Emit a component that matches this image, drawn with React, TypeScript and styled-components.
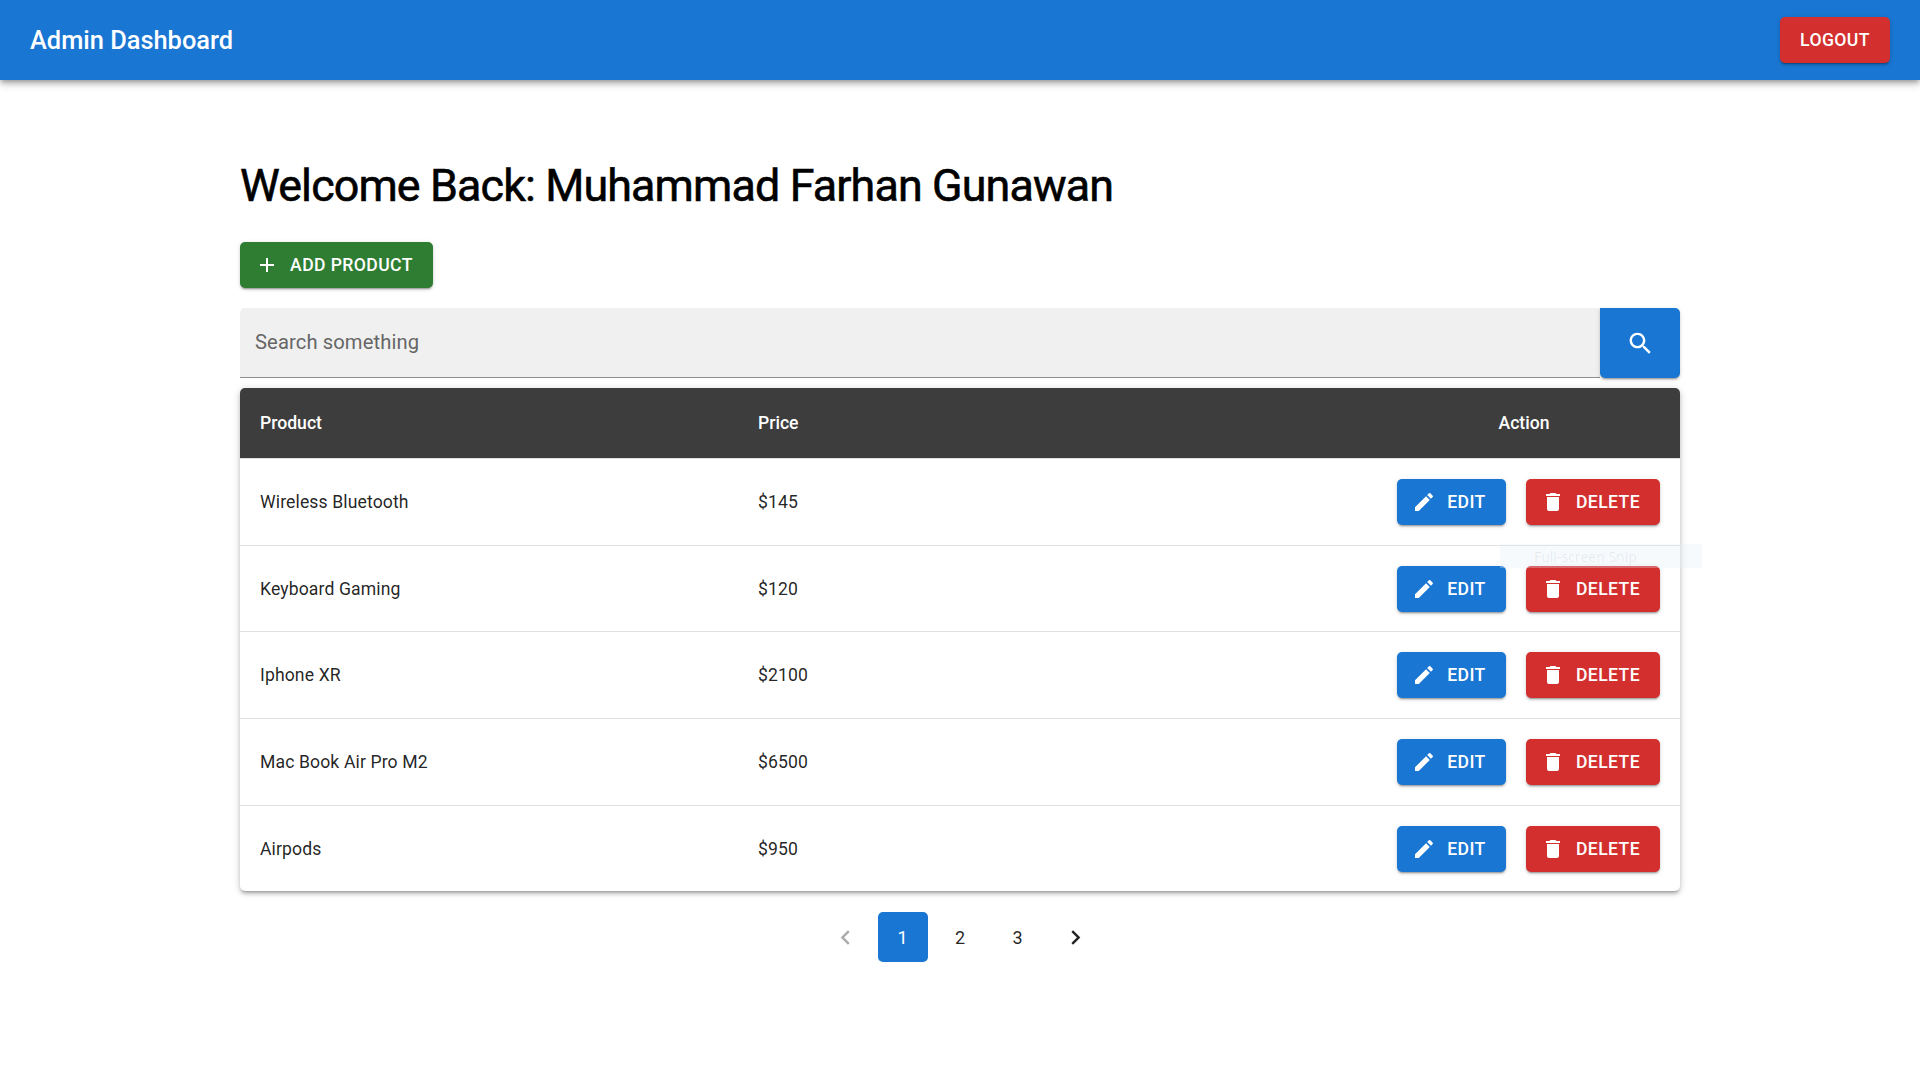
import * as React from "react"
import styled, { createGlobalStyle } from "styled-components"

const GlobalStyle = createGlobalStyle`
  html, body {
    margin: 0;
    padding: 0;
    background: #fff;
    font-family: Roboto, "Liberation Sans", sans-serif;
  }
  * {
    box-sizing: border-box;
  }
`

const Page = styled.div`
  position: relative;
  min-height: 1080px;
`
const AppBar = styled.header`
  height: 80px;
  padding: 0 30px;
  display: flex;
  align-items: center;
  justify-content: space-between;
  background: #1976d2;
  box-shadow: 0 2px 5px -1px rgba(0, 0, 0, 0.3), 0 5px 6px 0 rgba(0, 0, 0, 0.14), 0 1px 12px 0 rgba(0, 0, 0, 0.12);
`
const BrandTitle = styled.div`
  color: #fff;
  font-size: 25.4px;
  font-weight: 500;
  line-height: 1;
  padding-top: 1px;
`
const Button = styled.button<{ $color: string; $width: number; $height?: number }>`
  width: ${(p) => p.$width}px;
  height: ${(p) => p.$height ?? 46}px;
  padding: 0;
  display: flex;
  align-items: center;
  justify-content: center;
  gap: 11px;
  border: 0;
  border-radius: 5px;
  background: ${(p) => p.$color};
  color: #fff;
  font-family: inherit;
  font-size: 17.6px;
  font-weight: 500;
  letter-spacing: 0.4px;
  box-shadow: 0 3px 1px -2px rgba(0, 0, 0, 0.2), 0 2px 2px 0 rgba(0, 0, 0, 0.14), 0 1px 5px 0 rgba(0, 0, 0, 0.12);
  svg {
    flex: none;
    display: block;
    fill: currentColor;
  }
`
const StartIcon = styled.span`
  margin-left: -5px;
  display: block;
`
const Main = styled.main`
  width: 1440px;
  margin: 0 auto;
  padding-top: 77px;
`
const Heading = styled.h1`
  margin: 0 0 30px;
  height: 55px;
  color: #000;
  font-size: 44.8px;
  font-weight: 400;
  letter-spacing: -0.86px;
  -webkit-text-stroke: 0.6px #000;
  line-height: 57px;
`
const SearchRow = styled.div`
  margin-top: 20px;
  display: flex;
  height: 70px;
`
const SearchField = styled.input`
  flex: 1;
  height: 70px;
  padding: 0 15px 2px;
  border: 0;
  border-bottom: 1px solid #8c8c8c;
  border-radius: 5px 0 0 0;
  outline: none;
  background: #f0f0f0;
  font-family: inherit;
  font-size: 20.2px;
  letter-spacing: 0.1px;
  color: #333;
  &::placeholder {
    color: #666;
    opacity: 1;
  }
`
const SearchButton = styled(Button)`
  border-radius: 0 5px 5px 5px;
`
const TableCard = styled.div`
  margin-top: 10px;
  border-radius: 5px;
  overflow: hidden;
  box-shadow: 0 3px 3px -2px rgba(0, 0, 0, 0.25), 0 3px 4px 0 rgba(0, 0, 0, 0.16), 0 1px 8px 0 rgba(0, 0, 0, 0.14);
`
const Table = styled.table`
  width: 100%;
  border-collapse: separate;
  border-spacing: 0;
  table-layout: fixed;
`
const HeadRow = styled.tr`
  height: 70px;
  background: #3d3d3d;
`
const HeadCell = styled.th<{ $center?: boolean; $width: number }>`
  width: ${(p) => p.$width}px;
  padding: 0 20px;
  text-align: ${(p) => (p.$center ? "center" : "left")};
  color: #fff;
  font-size: 17.6px;
  font-weight: 500;
`
const BodyRow = styled.tr`
  height: 86.7px;
`
const BodyCell = styled.td`
  padding: 0 20px;
  border-top: 1px solid #e0e0e0;
  color: rgba(0, 0, 0, 0.87);
  font-size: 17.6px;
  letter-spacing: 0.12px;
`
const Actions = styled.div`
  display: flex;
  justify-content: flex-end;
  gap: 20px;
`
const Pager = styled.nav`
  margin-top: 21px;
  display: flex;
  justify-content: center;
  gap: 7.5px;
`
const PageItem = styled.div<{ $active?: boolean; $disabled?: boolean }>`
  width: 50px;
  height: 50px;
  display: flex;
  align-items: center;
  justify-content: center;
  border-radius: 5px;
  background: ${(p) => (p.$active ? "#1976d2" : "transparent")};
  color: ${(p) => (p.$active ? "#fff" : "rgba(0, 0, 0, 0.87)")};
  opacity: ${(p) => (p.$disabled ? 0.38 : 1)};
  font-size: 18px;
  svg {
    display: block;
    fill: currentColor;
  }
`
const SnipTip = styled.div`
  position: absolute;
  left: 1500px;
  top: 544px;
  width: 202px;
  height: 24px;
  padding: 2px 0 0 34px;
  background: rgba(225, 240, 250, 0.3);
  color: rgba(0, 0, 0, 0.08);
  font-family: "Open Sans", sans-serif;
  font-size: 14px;
  line-height: 22px;
`

const Icon = ({ d, size = 24 }: { d: string; size?: number }) => (
  <svg width={size} height={size} viewBox="0 0 24 24">
    <path d={d} />
  </svg>
)

const icons = {
  add: "M19 13h-6v6h-2v-6H5v-2h6V5h2v6h6v2z",
  edit: "M3 17.25V21h3.75L17.81 9.94l-3.75-3.75L3 17.25zM20.71 7.04c.39-.39.39-1.02 0-1.41l-2.34-2.34a.9959.9959 0 0 0-1.41 0l-1.83 1.83 3.75 3.75 1.83-1.83z",
  trash: "M6 19c0 1.1.9 2 2 2h8c1.1 0 2-.9 2-2V7H6v12zM19 4h-3.5l-1-1h-5l-1 1H5v2h14V4z",
  search: "M15.5 14h-.79l-.28-.27C15.41 12.59 16 11.11 16 9.5 16 5.91 13.09 3 9.5 3S3 5.91 3 9.5 5.91 16 9.5 16c1.61 0 3.09-.59 4.23-1.57l.27.28v.79l5 4.99L20.49 19l-4.99-5zm-6 0C7.01 14 5 11.99 5 9.5S7.01 5 9.5 5 14 7.01 14 9.5 11.99 14 9.5 14z",
  prev: "M15.41 7.41 14 6l-6 6 6 6 1.41-1.41L10.83 12z",
  next: "M10 6 8.59 7.41 13.17 12l-4.58 4.59L10 18l6-6z",
}

const products = [
  { name: "Wireless Bluetooth", price: "$145" },
  { name: "Keyboard Gaming", price: "$120" },
  { name: "Iphone XR", price: "$2100" },
  { name: "Mac Book Air Pro M2", price: "$6500" },
  { name: "Airpods", price: "$950" },
]

const App = () => {
  return (
    <Page>
      <GlobalStyle />
      <AppBar>
        <BrandTitle>Admin Dashboard</BrandTitle>
        <Button $color="#d32f2f" $width={110}>LOGOUT</Button>
      </AppBar>
      <Main>
        <Heading>Welcome Back: Muhammad Farhan Gunawan</Heading>
        <Button $color="#2e7d32" $width={193}>
          <StartIcon><Icon d={icons.add} /></StartIcon>
          ADD PRODUCT
        </Button>
        <SearchRow>
          <SearchField placeholder="Search something" />
          <SearchButton $color="#1976d2" $width={80} $height={70}>
            <Icon d={icons.search} size={29} />
          </SearchButton>
        </SearchRow>
        <TableCard>
          <Table>
            <thead>
              <HeadRow>
                <HeadCell $width={498}>Product</HeadCell>
                <HeadCell $width={630}>Price</HeadCell>
                <HeadCell $width={312} $center>Action</HeadCell>
              </HeadRow>
            </thead>
            <tbody>
              {products.map((p) => (
                <BodyRow key={p.name}>
                  <BodyCell>{p.name}</BodyCell>
                  <BodyCell>{p.price}</BodyCell>
                  <BodyCell>
                    <Actions>
                      <Button $color="#1976d2" $width={109}>
                        <StartIcon><Icon d={icons.edit} /></StartIcon>
                        EDIT
                      </Button>
                      <Button $color="#d32f2f" $width={134}>
                        <StartIcon><Icon d={icons.trash} /></StartIcon>
                        DELETE
                      </Button>
                    </Actions>
                  </BodyCell>
                </BodyRow>
              ))}
            </tbody>
          </Table>
        </TableCard>
        <Pager>
          <PageItem $disabled><Icon d={icons.prev} size={29} /></PageItem>
          <PageItem $active>1</PageItem>
          <PageItem>2</PageItem>
          <PageItem>3</PageItem>
          <PageItem><Icon d={icons.next} size={29} /></PageItem>
        </Pager>
      </Main>
      <SnipTip>Full-screen Snip</SnipTip>
    </Page>
  )
}

export default App
